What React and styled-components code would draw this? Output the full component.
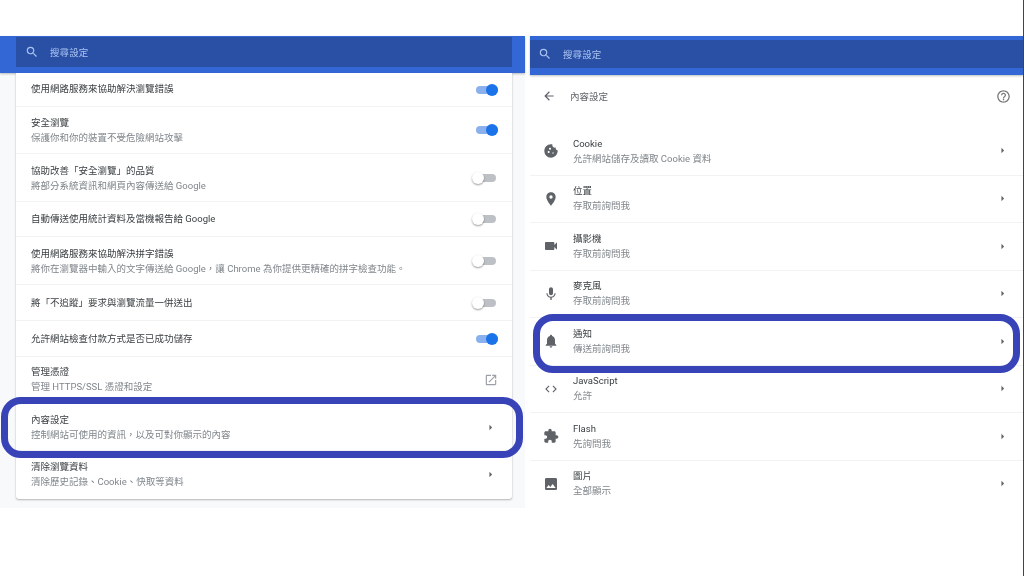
import React from "react";
import styled, { createGlobalStyle } from "styled-components";

const GlobalStyle = createGlobalStyle`
  html, body {
    margin: 0;
    padding: 0;
    background: #fff;
  }
  body {
    width: 1024px;
    height: 576px;
    overflow: hidden;
    font-family: Roboto, "Noto Sans CJK TC", sans-serif;
  }
`;

const Page = styled.div`
  display: flex;
  gap: 5px;
  width: 1024px;
  height: 576px;
  padding-top: 36px;
  box-sizing: border-box;
  border-right: 1px solid #444;
  filter: blur(0.35px);
`;

const LeftPanel = styled.section`
  width: 525px;
  height: 472px;
  background: #f8f9fa;
  display: flex;
  flex-direction: column;
`;

const RightPanel = styled.section`
  width: 493px;
  height: 472px;
  background: #fff;
  display: flex;
  flex-direction: column;
`;

const Header = styled.header`
  height: ${(p) => p.$height}px;
  flex: none;
  box-sizing: border-box;
  background: #3367d6;
  padding: ${(p) => p.$top}px ${(p) => p.$right}px 0 ${(p) => p.$left}px;
  box-shadow: 0 1px 2px rgba(60, 64, 67, 0.35);
`;

const SearchBox = styled.div`
  height: ${(p) => p.$height}px;
  background: #2a50a6;
  display: flex;
  align-items: center;
  gap: 11px;
  padding-left: ${(p) => p.$pad}px;
  color: #a9c3f0;
  font-size: 9.5px;
  letter-spacing: 0.1px;
`;

const Card = styled.div`
  margin: 0 13px 0 16px;
  height: 426px;
  background: #fff;
  border-radius: 0 0 3px 3px;
  box-shadow: 0 1px 2px rgba(60, 64, 67, 0.35), 0 0 1px rgba(60, 64, 67, 0.2);
  display: flex;
  flex-direction: column;
`;

const Row = styled.div`
  position: relative;
  height: ${(p) => p.$height}px;
  flex: none;
  box-sizing: border-box;
  display: flex;
  align-items: center;
  padding: 0 ${(p) => p.$right}px 0 ${(p) => p.$left}px;
  border-top: ${(p) => (p.$first ? "none" : "1px solid #f1f2f3")};
`;

const IconSlot = styled.div`
  width: 16px;
  display: flex;
  justify-content: center;
  margin-right: 14px;
  color: #5f6368;
`;

const TextBlock = styled.div`
  flex: 1;
  min-width: 0;
  display: flex;
  flex-direction: column;
  gap: 3px;
  margin-top: ${(p) => p.$nudge || 0}px;
`;

const Title = styled.div`
  font-size: 9.5px;
  line-height: 12px;
  color: #3c4043;
  white-space: nowrap;
`;

const Sub = styled.div`
  font-size: 9.5px;
  line-height: 12px;
  color: #80868b;
  white-space: nowrap;
`;

const Track = styled.div`
  position: relative;
  width: 22px;
  height: 8px;
  margin-right: ${(p) => (p.$on ? 0 : 2)}px;
  border-radius: 4px;
  background: ${(p) => (p.$on ? "#8ab1ee" : "#bdc1c6")};
`;

const Knob = styled.div`
  position: absolute;
  top: -2px;
  ${(p) => (p.$on ? "right: 0;" : "left: -2px;")}
  width: 12px;
  height: 12px;
  border-radius: 50%;
  background: ${(p) => (p.$on ? "#1a73e8" : "#fff")};
  box-shadow: ${(p) => (p.$on ? "none" : "0 1px 2px rgba(0,0,0,0.4)")};
`;

const BackRow = styled.div`
  height: 42px;
  margin-bottom: 10px;
  flex: none;
  display: flex;
  align-items: center;
  padding: 0 12px;
  font-size: 9.5px;
  color: #5f6368;
`;

const BackTitle = styled.div`
  flex: 1;
  margin-left: 14px;
`;

const Highlight = styled.div`
  position: absolute;
  z-index: 1;
  top: ${(p) => p.$top}px;
  bottom: ${(p) => p.$bottom}px;
  left: ${(p) => p.$left}px;
  right: ${(p) => p.$right}px;
  border: 7px solid #3843b8;
  border-radius: 20px;
  pointer-events: none;
`;

const Icon = ({ d, size = 14, color = "currentColor" }) => (
  <svg width={size} height={size} viewBox="0 0 24 24" fill={color} style={{ display: "block", flex: "none" }}>
    <path d={d} />
  </svg>
);

const paths = {
  search: "M15.5 14h-.79l-.28-.27A6.47 6.47 0 0 0 16 9.5 6.5 6.5 0 1 0 9.5 16c1.61 0 3.09-.59 4.23-1.57l.27.28v.79l5 4.99L20.49 19l-4.99-5zm-6 0C7.01 14 5 11.99 5 9.5S7.01 5 9.5 5 14 7.01 14 9.5 11.99 14 9.5 14z",
  back: "M20 11H7.83l5.59-5.59L12 4l-8 8 8 8 1.41-1.41L7.83 13H20v-2z",
  help: "M11 18h2v-2h-2v2zm1-16C6.48 2 2 6.48 2 12s4.48 10 10 10 10-4.48 10-10S17.52 2 12 2zm0 18c-4.41 0-8-3.59-8-8s3.59-8 8-8 8 3.59 8 8-3.59 8-8 8zm0-14c-2.21 0-4 1.79-4 4h2c0-1.1.9-2 2-2s2 .9 2 2c0 2-3 1.75-3 5h2c0-2.25 3-2.5 3-5 0-2.21-1.79-4-4-4z",
  external: "M19 19H5V5h7V3H5a2 2 0 0 0-2 2v14a2 2 0 0 0 2 2h14c1.1 0 2-.9 2-2v-7h-2v7zM14 3v2h3.59l-9.83 9.83 1.41 1.41L19 6.41V10h2V3h-7z",
  caret: "M10 17l5-5-5-5v10z",
  cookie: "M21.95 10.99c-1.79-.03-3.7-1.95-2.68-4.22-2.97 1-5.78-1.59-5.19-4.56C7.11.74 2 6.41 2 12c0 5.52 4.48 10 10 10 5.89 0 10.54-5.08 9.95-11.01zM8.5 15c-.83 0-1.5-.67-1.5-1.5S7.67 12 8.5 12s1.5.67 1.5 1.5S9.33 15 8.5 15zm2-5C9.67 10 9 9.33 9 8.5S9.67 7 10.5 7s1.5.67 1.5 1.5-.67 1.5-1.5 1.5zm4.5 6c-.55 0-1-.45-1-1s.45-1 1-1 1 .45 1 1-.45 1-1 1z",
  location: "M12 2C8.13 2 5 5.13 5 9c0 5.25 7 13 7 13s7-7.75 7-13c0-3.87-3.13-7-7-7zm0 9.5a2.5 2.5 0 0 1 0-5 2.5 2.5 0 0 1 0 5z",
  camera: "M17 10.5V7c0-.55-.45-1-1-1H4c-.55 0-1 .45-1 1v10c0 .55.45 1 1 1h12c.55 0 1-.45 1-1v-3.5l4 4v-11l-4 4z",
  mic: "M12 14c1.66 0 2.99-1.34 2.99-3L15 5c0-1.66-1.34-3-3-3S9 3.34 9 5v6c0 1.66 1.34 3 3 3zm5.3-3c0 3-2.54 5.1-5.3 5.1S6.7 14 6.7 11H5c0 3.41 2.72 6.23 6 6.72V21h2v-3.28c3.28-.48 6-3.3 6-6.72h-1.7z",
  bell: "M12 22c1.1 0 2-.9 2-2h-4c0 1.1.89 2 2 2zm6-6v-5c0-3.07-1.64-5.64-4.5-6.32V4c0-.83-.67-1.5-1.5-1.5s-1.5.67-1.5 1.5v.68C7.63 5.36 6 7.92 6 11v5l-2 2v1h16v-1l-2-2z",
  code: "M9.4 16.6L4.8 12l4.6-4.6L8 6l-6 6 6 6 1.4-1.4zm5.2 0l4.6-4.6-4.6-4.6L16 6l6 6-6 6-1.4-1.4z",
  flash: "M20.5 11H19V7c0-1.1-.9-2-2-2h-4V3.5C13 2.12 11.88 1 10.5 1S8 2.12 8 3.5V5H4c-1.1 0-1.99.9-1.99 2v3.8H3.5c1.49 0 2.7 1.21 2.7 2.7s-1.21 2.7-2.7 2.7H2V20c0 1.1.9 2 2 2h3.8v-1.5c0-1.49 1.21-2.7 2.7-2.7 1.49 0 2.7 1.21 2.7 2.7V22H17c1.1 0 2-.9 2-2v-4h1.5c1.38 0 2.5-1.12 2.5-2.5S21.88 11 20.5 11z",
  image: "M21 19V5c0-1.1-.9-2-2-2H5c-1.1 0-2 .9-2 2v14c0 1.1.9 2 2 2h14c1.1 0 2-.9 2-2zM8.5 13.5l2.5 3.01L14.5 12l4.5 6H5l3.5-4.5z",
};

const securityRows = [
  { h: 33, nudge: -2, title: "使用網路服務來協助解決瀏覽錯誤", on: true },
  { h: 47, title: "安全瀏覽", sub: "保護你和你的裝置不受危險網站攻擊", on: true },
  { h: 48, nudge: 2, title: "協助改善「安全瀏覽」的品質", sub: "將部分系統資訊和網頁內容傳送給 Google", on: false },
  { h: 35, title: "自動傳送使用統計資料及當機報告給 Google", on: false },
  { h: 48, nudge: 2, title: "使用網路服務來協助解決拼字錯誤", sub: "將你在瀏覽器中輸入的文字傳送給 Google，讓 Chrome 為你提供更精確的拼字檢查功能。", on: false },
  { h: 36, title: "將「不追蹤」要求與瀏覽流量一併送出", on: false },
  { h: 36, title: "允許網站檢查付款方式是否已成功儲存", on: true },
  { h: 47, nudge: -2, title: "管理憑證", sub: "管理 HTTPS/SSL 憑證和設定", icon: "external" },
  { h: 47, title: "內容設定", sub: "控制網站可使用的資訊，以及可對你顯示的內容", icon: "caret", mark: true },
  { h: 47, title: "清除瀏覽資料", sub: "清除歷史記錄、Cookie、快取等資料", icon: "caret" },
];

const contentRows = [
  { icon: "cookie", nudge: 2, title: "Cookie", sub: "允許網站儲存及讀取 Cookie 資料" },
  { icon: "location", title: "位置", sub: "存取前詢問我" },
  { icon: "camera", title: "攝影機", sub: "存取前詢問我" },
  { icon: "mic", title: "麥克風", sub: "存取前詢問我" },
  { icon: "bell", title: "通知", sub: "傳送前詢問我", mark: true },
  { icon: "code", title: "JavaScript", sub: "允許" },
  { icon: "flash", title: "Flash", sub: "先詢問我" },
  { icon: "image", title: "圖片", sub: "全部顯示" },
];

const SecurityRow = ({ row, first }) => (
  <Row $height={row.h} $left={15} $right={row.icon === "caret" ? 15 : 14} $first={first}>
    <TextBlock $nudge={row.nudge}>
      <Title>{row.title}</Title>
      {row.sub && <Sub>{row.sub}</Sub>}
    </TextBlock>
    {row.icon === "external" && <Icon d={paths.external} size={14} color="#9aa0a6" />}
    {row.icon === "caret" && <Icon d={paths.caret} size={13} color="#5f6368" />}
    {row.icon === undefined && (
      <Track $on={row.on}>
        <Knob $on={row.on} />
      </Track>
    )}
    {row.mark && <Highlight $top={-7} $bottom={-8} $left={-15} $right={-11} />}
  </Row>
);

const ContentRow = ({ row, first }) => (
  <Row $height={47.5} $left={13} $right={14} $first={first}>
    <IconSlot>
      <Icon d={paths[row.icon]} size={row.icon === "code" ? 14 : 16} />
    </IconSlot>
    <TextBlock $nudge={row.nudge}>
      <Title>{row.title}</Title>
      <Sub>{row.sub}</Sub>
    </TextBlock>
    <Icon d={paths.caret} size={13} color="#5f6368" />
    {row.mark && <Highlight $top={-4} $bottom={-8.5} $left={3} $right={3} />}
  </Row>
);

export default function App() {
  return (
    <>
      <GlobalStyle />
      <Page>
        <LeftPanel>
          <Header $height={37} $top={1} $left={16} $right={13}>
            <SearchBox $height={30} $pad={9}>
              <Icon d={paths.search} size={14} />
              <span>搜尋設定</span>
            </SearchBox>
          </Header>
          <Card>
            {securityRows.map((row, i) => (
              <SecurityRow key={row.title} row={row} first={i === 0} />
            ))}
          </Card>
        </LeftPanel>
        <RightPanel>
          <Header $height={39} $top={4} $left={0} $right={0}>
            <SearchBox $height={28} $pad={8}>
              <Icon d={paths.search} size={14} />
              <span>搜尋設定</span>
            </SearchBox>
          </Header>
          <BackRow>
            <Icon d={paths.back} size={14} />
            <BackTitle>內容設定</BackTitle>
            <Icon d={paths.help} size={15} color="#757575" />
          </BackRow>
          {contentRows.map((row, i) => (
            <ContentRow key={row.title} row={row} first={i === 0} />
          ))}
        </RightPanel>
      </Page>
    </>
  );
}
